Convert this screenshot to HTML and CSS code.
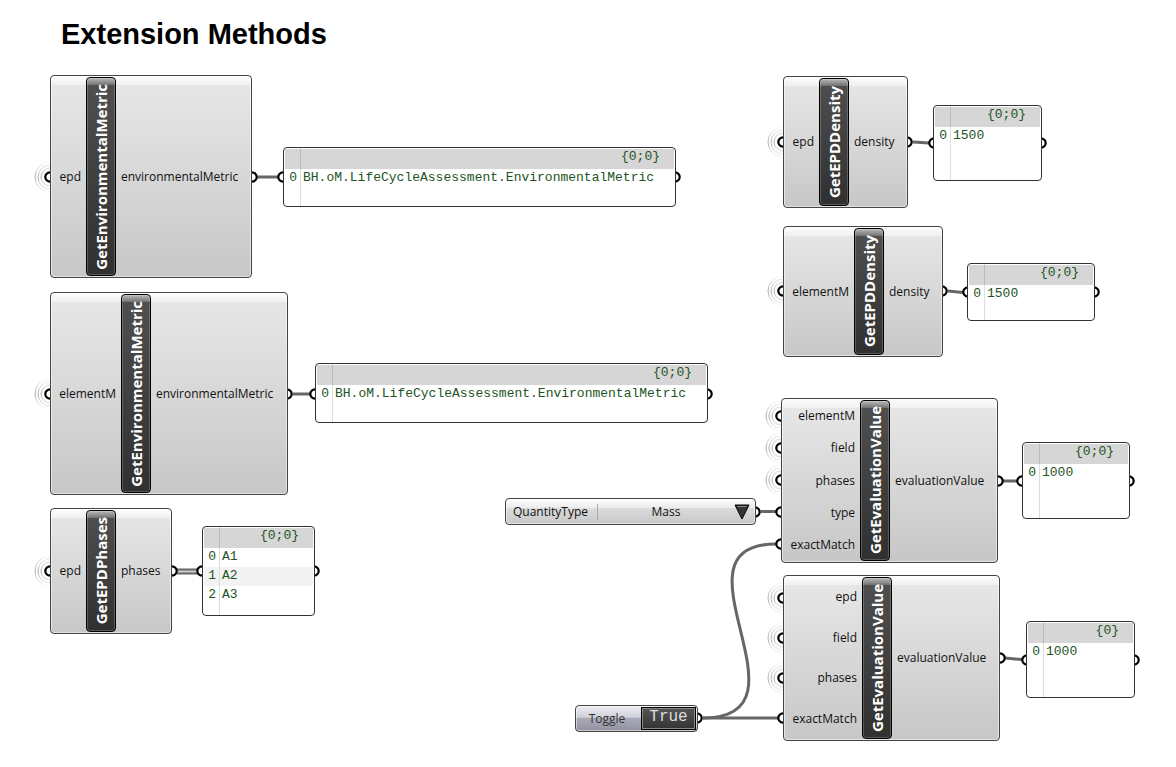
FILE: index.html
```html
<!DOCTYPE html>
<html lang="en">
<head>
<meta charset="utf-8">
<title>Extension Methods</title>
<link rel="stylesheet" href="styles.css">
</head>
<body>
<main class="canvas">
  <svg class="wires" aria-hidden="true">
    <defs>
      <linearGradient id="fade" x1="0" y1="-16" x2="0" y2="16" gradientUnits="userSpaceOnUse">
        <stop offset="0" stop-color="#aaa" stop-opacity="0"/>
        <stop offset=".5" stop-color="#aaa"/>
        <stop offset="1" stop-color="#aaa" stop-opacity="0"/>
      </linearGradient>
      <circle id="grip" r="4.700" fill="#fff" stroke="#000" stroke-width="2.200"/>
      <g id="wireless" fill="none" stroke="url(#fade)">
        <path d="M0-9A9 9 0 0 0 0 9"/>
        <path d="M0-12A12 12 0 0 0 0 12"/>
        <path d="M0-15A15 15 0 0 0 0 15"/>
      </g>
    </defs>
    <g class="wire">
      <path d="M257 177H279M293 394H311M913 142L929 143M948 291L963 292.500M1003 481H1018M1005 658L1022 659.500M761 511.500H776M703 718H779"/>
      <path d="M703 718C820 718 662 544 776 544"/>
    </g>
    <path class="wire-gap" d="M177 571.500H198"/>
    <path class="wire-list" d="M177 569.500H198M177 573.500H198"/>
    <use href="#wireless" x="50" y="177"/><use href="#wireless" x="50" y="394"/><use href="#wireless" x="50" y="571"/>
    <use href="#wireless" x="783" y="142"/><use href="#wireless" x="783" y="291"/>
    <use href="#wireless" x="781" y="416"/><use href="#wireless" x="781" y="448"/><use href="#wireless" x="781" y="480"/>
    <use href="#wireless" x="783" y="598"/><use href="#wireless" x="783" y="638"/><use href="#wireless" x="783" y="678"/>
    <use href="#grip" x="50" y="177"/><use href="#grip" x="252" y="177"/><use href="#grip" x="283" y="177"/><use href="#grip" x="675" y="177"/>
    <use href="#grip" x="50" y="394"/><use href="#grip" x="287" y="394"/><use href="#grip" x="315" y="394"/><use href="#grip" x="707" y="394"/>
    <use href="#grip" x="50" y="571"/><use href="#grip" x="172" y="571"/><use href="#grip" x="202" y="571"/><use href="#grip" x="314" y="571"/>
    <use href="#grip" x="783" y="142"/><use href="#grip" x="907" y="142"/><use href="#grip" x="934" y="143"/><use href="#grip" x="1041" y="143"/>
    <use href="#grip" x="783" y="291"/><use href="#grip" x="942" y="291"/><use href="#grip" x="968" y="292"/><use href="#grip" x="1094" y="292"/>
    <use href="#grip" x="781" y="416"/><use href="#grip" x="781" y="448"/><use href="#grip" x="781" y="480"/><use href="#grip" x="781" y="512"/><use href="#grip" x="781" y="544"/>
    <use href="#grip" x="998" y="481"/><use href="#grip" x="1022" y="481"/><use href="#grip" x="1129" y="481"/>
    <use href="#grip" x="783" y="598"/><use href="#grip" x="783" y="638"/><use href="#grip" x="783" y="678"/><use href="#grip" x="783" y="718"/>
    <use href="#grip" x="1000" y="658"/><use href="#grip" x="1027" y="660"/><use href="#grip" x="1134" y="660"/>
    <use href="#grip" x="755" y="512"/><use href="#grip" x="697" y="718"/>
  </svg>

  <h1 class="title">Extension Methods</h1>

  <section class="node metric-epd">
    <div class="inputs"><span>epd</span></div>
    <h2 class="name"><span>GetEnvironmentalMetric</span></h2>
    <div class="outputs">environmentalMetric</div>
  </section>
  <section class="panel metric-epd-panel">
    <header>{0;0}</header>
    <div class="row"><span class="index">0</span><span>BH.oM.LifeCycleAssessment.EnvironmentalMetric</span></div>
  </section>

  <section class="node metric-element">
    <div class="inputs"><span>elementM</span></div>
    <h2 class="name"><span>GetEnvironmentalMetric</span></h2>
    <div class="outputs">environmentalMetric</div>
  </section>
  <section class="panel metric-element-panel">
    <header>{0;0}</header>
    <div class="row"><span class="index">0</span><span>BH.oM.LifeCycleAssessment.EnvironmentalMetric</span></div>
  </section>

  <section class="node phases">
    <div class="inputs"><span>epd</span></div>
    <h2 class="name"><span>GetEPDPhases</span></h2>
    <div class="outputs">phases</div>
  </section>
  <section class="panel phases-panel">
    <header>{0;0}</header>
    <div class="row"><span class="index">0</span><span>A1</span></div>
    <div class="row alt"><span class="index">1</span><span>A2</span></div>
    <div class="row"><span class="index">2</span><span>A3</span></div>
  </section>

  <section class="node density-epd">
    <div class="inputs"><span>epd</span></div>
    <h2 class="name"><span>GetEPDDensity</span></h2>
    <div class="outputs">density</div>
  </section>
  <section class="panel density-epd-panel">
    <header>{0;0}</header>
    <div class="row"><span class="index">0</span><span>1500</span></div>
  </section>

  <section class="node density-element">
    <div class="inputs"><span>elementM</span></div>
    <h2 class="name"><span>GetEPDDensity</span></h2>
    <div class="outputs">density</div>
  </section>
  <section class="panel density-element-panel">
    <header>{0;0}</header>
    <div class="row"><span class="index">0</span><span>1500</span></div>
  </section>

  <section class="node value-element">
    <div class="inputs"><span>elementM</span><span>field</span><span>phases</span><span>type</span><span>exactMatch</span></div>
    <h2 class="name"><span>GetEvaluationValue</span></h2>
    <div class="outputs">evaluationValue</div>
  </section>
  <section class="panel value-element-panel">
    <header>{0;0}</header>
    <div class="row"><span class="index">0</span><span>1000</span></div>
  </section>

  <section class="node value-epd">
    <div class="inputs"><span>epd</span><span>field</span><span>phases</span><span>exactMatch</span></div>
    <h2 class="name"><span>GetEvaluationValue</span></h2>
    <div class="outputs">evaluationValue</div>
  </section>
  <section class="panel value-epd-panel">
    <header>{0}</header>
    <div class="row"><span class="index">0</span><span>1000</span></div>
  </section>

  <div class="node quantity">
    <label for="quantity">QuantityType</label>
    <select id="quantity"><option>Mass</option></select>
    <svg class="arrow" viewBox="0 0 16 16" aria-hidden="true"><path d="M1 1H15L8 15Z" fill="#333" stroke="#000"/><path d="M3.500 2.500H12.500" stroke="#888"/></svg>
  </div>

  <div class="node toggle">
    <label for="toggle">Toggle</label>
    <button id="toggle" type="button" aria-pressed="true">True</button>
  </div>
</main>
</body>
</html>
```
FILE: styles.css
```css
* { box-sizing: border-box; }

body {
  margin: 0;
  background: #fff;
  color: #111;
  font: 12px/16px "Open Sans", "Noto Sans", sans-serif;
}

.canvas {
  position: relative;
  min-height: 100vh;
  overflow: hidden;
}

.wires {
  position: absolute;
  inset: 0;
  width: 100%;
  height: 100%;
}

.wire { fill: none; stroke: #666; stroke-width: 3px; }
.wire-gap { stroke: #ccc; stroke-width: 3px; }
.wire-list { stroke: #666; stroke-width: 2px; }

.title {
  margin: 0;
  padding: 16px 0 0 61px;
  color: #000;
  font: 700 29px/36px "Liberation Sans", Arial, sans-serif;
}

/* Components */
.node {
  position: absolute;
  display: grid;
  grid-template-columns: 34px 30px 1fr;
  padding: 1px;
  border: 1px solid #444;
  border-radius: 4px;
  background:
    linear-gradient(rgba(255, 255, 255, 0.9), rgba(255, 255, 255, 0.4)) top / 100% 9px no-repeat,
    linear-gradient(#e8e8e8, #c7c7c7);
  box-shadow: inset 0 0 0 1px rgba(255, 255, 255, 0.5);
  white-space: nowrap;
}

.inputs {
  display: flex;
  flex-direction: column;
  padding-right: 5px;
}

.inputs span {
  flex: 1;
  display: flex;
  align-items: center;
  justify-content: flex-end;
}

.name {
  display: flex;
  align-items: center;
  justify-content: center;
  margin: 0;
  border: 1px solid #000;
  border-radius: 4px;
  background:
    linear-gradient(rgba(255, 255, 255, 0.6), rgba(255, 255, 255, 0.2)) top / 100% 7px no-repeat,
    linear-gradient(#505050, #303030);
  box-shadow: inset 0 0 0 1px rgba(255, 255, 255, 0.2);
  color: #fff;
  font-size: 15px;
  line-height: 20px;
}

.name span {
  writing-mode: vertical-rl;
  transform: rotate(180deg);
}

.outputs {
  display: flex;
  align-items: center;
  padding-left: 5px;
}

.metric-epd { left: 50px; top: 75px; width: 202px; height: 203px; }
.metric-element { left: 50px; top: 292px; width: 238px; height: 203px; }
.phases { left: 50px; top: 508px; width: 122px; height: 126px; }
.density-epd { left: 783px; top: 76px; width: 125px; height: 132px; }
.density-element { left: 783px; top: 226px; width: 160px; height: 131px; }
.value-element { left: 781px; top: 398px; width: 217px; height: 165px; }
.value-epd { left: 783px; top: 575px; width: 217px; height: 166px; }

.metric-element, .density-element { grid-template-columns: 69px 30px 1fr; }
.value-element, .value-epd { grid-template-columns: 77px 30px 1fr; }

/* Data panels */
.panel {
  position: absolute;
  padding: 1px;
  border: 1px solid #333;
  border-radius: 4px;
  background: linear-gradient(90deg, transparent 16px, #ddd 16px, #ddd 17px, transparent 17px) #fff;
  color: #235323;
  font: 13px/19px "Liberation Mono", "Courier New", monospace;
  white-space: nowrap;
}

.panel header {
  height: 20px;
  padding-right: 14px;
  background: linear-gradient(90deg, transparent 15px, #bbb 15px, #bbb 16px, transparent 16px) #d6d6d6;
  line-height: 16px;
  text-align: right;
}

.row {
  display: grid;
  grid-template-columns: 15px 1fr;
  column-gap: 3px;
  height: 19px;
  line-height: 18px;
}

.alt { background: linear-gradient(90deg, transparent 15px, #ddd 15px, #ddd 16px, transparent 16px) #f3f3f3; }

.index { text-align: right; padding-right: 3px; }

.metric-epd-panel { left: 283px; top: 147px; width: 393px; height: 60px; }
.metric-element-panel { left: 315px; top: 363px; width: 393px; height: 60px; }
.phases-panel { left: 202px; top: 526px; width: 113px; height: 90px; }
.density-epd-panel { left: 933px; top: 105px; width: 109px; height: 76px; }
.density-element-panel { left: 967px; top: 263px; width: 128px; height: 58px; }
.value-element-panel { left: 1022px; top: 442px; width: 108px; height: 77px; }
.value-epd-panel { left: 1026px; top: 621px; width: 109px; height: 77px; }

/* Value list and toggle */
.quantity {
  left: 505px;
  top: 498px;
  width: 251px;
  height: 27px;
  grid-template-columns: 91px 1fr 20px;
  align-items: center;
}

.quantity label {
  border-right: 1px solid #aaa;
  padding-left: 6px;
}

.quantity select {
  appearance: none;
  width: 100%;
  padding: 0;
  border: 0;
  background: transparent;
  color: inherit;
  font: inherit;
  text-align-last: center;
}

.arrow { width: 16px; height: 16px; }

.toggle {
  left: 575px;
  top: 705px;
  width: 123px;
  height: 27px;
  grid-template-columns: 64px 1fr;
  align-items: stretch;
  background: linear-gradient(#eeeef2, #cfcfd8 45%, #a9a9b8 50%, #9292a2);
}

.toggle label {
  align-self: center;
  padding-right: 4px;
  text-align: center;
  color: #333;
}

.toggle button {
  padding: 0 0 3px;
  border: 1px solid #000;
  background: linear-gradient(#555, #333);
  box-shadow: inset 0 0 0 1px #888;
  color: #ddd;
  font: 16px/18px "Liberation Mono", "Courier New", monospace;
}
```
